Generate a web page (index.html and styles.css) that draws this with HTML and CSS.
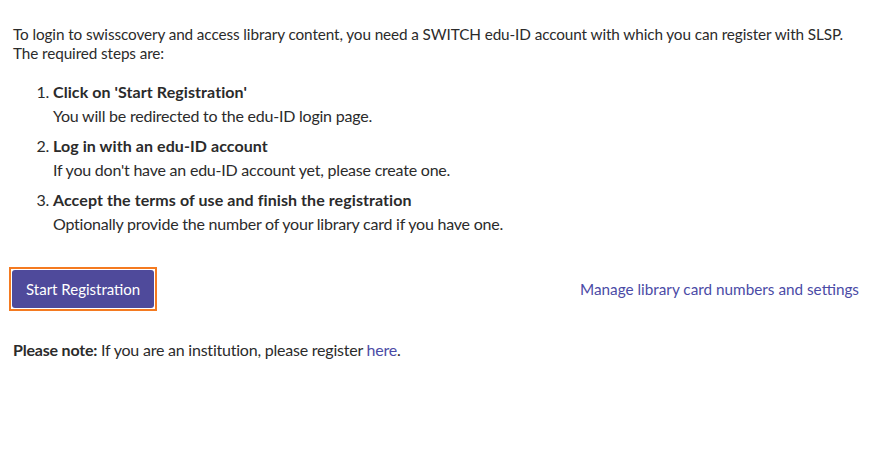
FILE: index.html
```html
<!DOCTYPE html>
<html lang="en">
<head>
<meta charset="utf-8">
<title>Registration</title>
<link rel="stylesheet" href="styles.css">
</head>
<body>
<main class="page">
  <p class="intro">To login to swisscovery and access library content, you need a SWITCH edu-ID account with which you can register with SLSP.<br>The required steps are:</p>
  <ol class="steps">
    <li><strong>Click on 'Start Registration'</strong><span class="desc">You will be redirected to the edu-ID login page.</span></li>
    <li><strong>Log in with an edu-ID account</strong><span class="desc">If you don't have an edu-ID account yet, please create one.</span></li>
    <li><strong>Accept the terms of use and finish the registration</strong><span class="desc">Optionally provide the number of your library card if you have one.</span></li>
  </ol>
  <div class="actions">
    <span class="focus-ring"><button class="btn" type="button">Start Registration</button></span>
    <a class="manage" href="#">Manage library card numbers and settings</a>
  </div>
  <p class="note"><strong>Please note:</strong> If you are an institution, please register <a href="#">here</a>.</p>
</main>
</body>
</html>
```
FILE: styles.css
```css
html, body {
  margin: 0;
  padding: 0;
  background: #fff;
}
body {
  font-family: Lato, "Liberation Sans", sans-serif;
  font-size: 16px;
  color: #2b2b2b;
  letter-spacing: -0.22px;
}
.page {
  padding: 25px 14px 0 13px;
}
.intro {
  margin: 0;
  line-height: 19px;
  font-size: 15.3px;
  letter-spacing: -0.1px;
}
.steps {
  margin: 17px 0 0;
  padding-left: 40px;
  line-height: 24px;
}
.steps li {
  margin-bottom: 6px;
}
.steps strong {
  font-weight: 700;
  display: block;
  letter-spacing: 0.08px;
}
.desc {
  display: block;
}
.actions {
  display: flex;
  justify-content: space-between;
  align-items: center;
  margin-top: 31px;
}
.focus-ring {
  display: inline-flex;
  border: 2px solid #f47a20;
  padding: 1px;
  margin-left: -4px;
}
.btn {
  font-family: inherit;
  font-size: 15px;
  letter-spacing: 0;
  color: #fff;
  background: #4f4a9b;
  border: none;
  border-radius: 3px;
  height: 38px;
  padding: 0 14px;
  cursor: pointer;
}
.manage {
  color: #4b4ba6;
  text-decoration: none;
  font-size: 15.3px;
  letter-spacing: 0;
}
.note {
  margin: 29px 0 0;
  line-height: 20px;
}
.note strong {
  letter-spacing: -0.2px;
}
.note a {
  color: #4b4ba6;
  text-decoration: none;
}
```
